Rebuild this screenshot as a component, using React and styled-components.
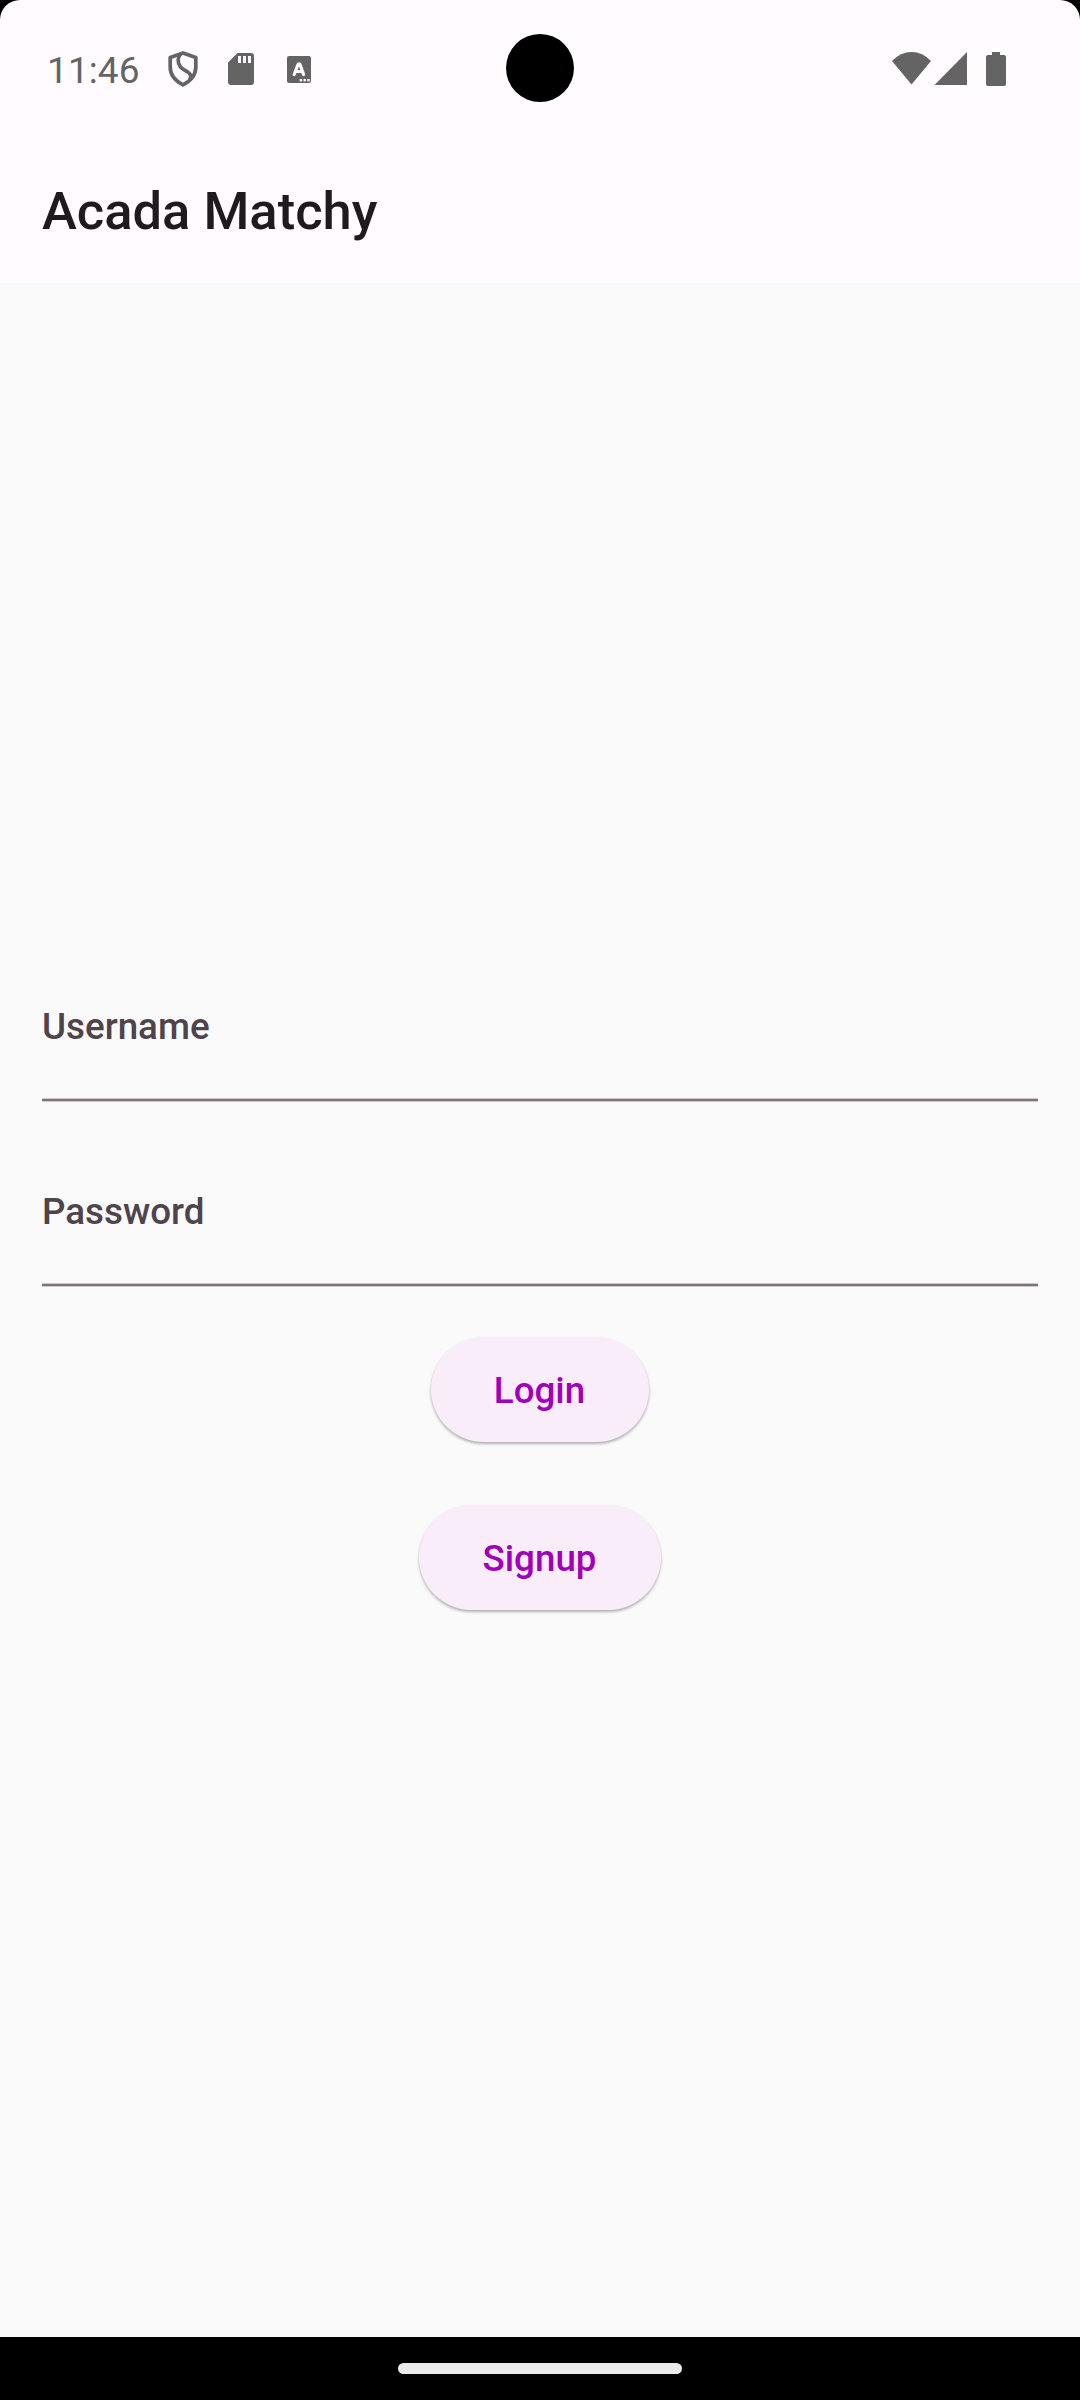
import React from "react";
import styled, { createGlobalStyle } from "styled-components";

const GlobalStyle = createGlobalStyle`
  html, body { margin: 0; padding: 0; background: #000; }
  * { box-sizing: border-box; }
`;

const Screen = styled.div`
  position: relative;
  width: 1080px;
  height: 2400px;
  display: flex;
  flex-direction: column;
  background: #000;
  font-family: Roboto, "Liberation Sans", sans-serif;
`;

const Header = styled.header`
  height: 283px;
  flex: none;
  display: flex;
  flex-direction: column;
  background: #fffbff;
  border-radius: 20px 20px 0 0;
`;

const StatusBar = styled.div`
  height: 136px;
  display: flex;
  align-items: center;
  justify-content: space-between;
  padding: 2px 74px 0 47px;
`;

const StatusGroup = styled.div`
  display: flex;
  align-items: center;
`;

const Clock = styled.span`
  width: 121px;
  padding-top: 3px;
  font-size: 37px;
  line-height: 44px;
  letter-spacing: 0.1px;
  color: #646464;
`;

const StatusIcon = styled.svg`
  display: block;
  flex: none;
  margin-right: ${(p) => p.$after || 0}px;
  color: #646464;
`;

const Camera = styled.div`
  position: absolute;
  left: 506px;
  top: 34px;
  width: 68px;
  height: 68px;
  border-radius: 50%;
  background: #000;
`;

const AppBar = styled.div`
  height: 147px;
  display: flex;
  align-items: center;
  padding: 2px 42px 0;
`;

const Title = styled.h1`
  margin: 0;
  font-size: 52.5px;
  line-height: 66px;
  font-weight: 500;
  color: #1e1a1d;
`;

const Form = styled.form`
  flex: 1;
  display: flex;
  flex-direction: column;
  padding: 700px 42px 0;
  background: #fafafa;
`;

const Field = styled.div`
  height: 119px;
  display: flex;
  flex-direction: column;
  justify-content: space-between;
  margin-bottom: ${(p) => p.$after}px;
`;

const Label = styled.label`
  padding-top: 22px;
  font-size: 36.75px;
  line-height: 44px;
  font-weight: 500;
  color: #4e444b;
`;

const Underline = styled.div`
  height: 4px;
  background: linear-gradient(
    #cdc9cc 0 1px,
    #7f747c 1px 3px,
    #cdc9cc 3px 4px
  );
`;

const Button = styled.button`
  align-self: center;
  width: ${(p) => p.$width}px;
  height: 105px;
  margin: 0 0 63px;
  padding: 2px 1px 0 0;
  border: 0;
  border-radius: 53px;
  background: #f9edf9;
  box-shadow: 0 2px 3px rgba(0, 0, 0, 0.28), 0 1px 2px rgba(0, 0, 0, 0.04);
  font: 500 36.75px/44px Roboto, "Liberation Sans", sans-serif;
  color: #a100bb;
`;

const NavBar = styled.nav`
  height: 63px;
  flex: none;
  display: flex;
  align-items: center;
  justify-content: center;
  background: #000;
`;

const HomeHandle = styled.div`
  width: 284px;
  height: 11px;
  border-radius: 6px;
  background: #ebebeb;
`;

const ShieldIcon = () => (
  <StatusIcon width="30" height="36" viewBox="0 0 30 36" $after={30} fill="none" stroke="currentColor" strokeWidth="3.7" strokeLinejoin="round">
    <path d="M15 2L27.800 6.400V16C27.800 23.500 22.500 30 15 33.800C7.500 30 2.200 23.500 2.200 16V6.400Z" />
    <path d="M12.500 3C9.500 6.500 9.300 12 12.500 16C16 19.800 20.500 20.500 22.300 23.500C23.200 25.200 22.500 27.500 21.800 29" />
  </StatusIcon>
);

const SdCardIcon = () => (
  <StatusIcon width="26" height="32" viewBox="0 0 26 32" $after={33} fill="currentColor">
    <path fillRule="evenodd" d="M9.500 0H23Q26 0 26 3V29Q26 32 23 32H3Q0 32 0 29V9.500ZM10 3V10H13V3ZM15 3V10H18V3ZM20 3V10H23V3Z" />
  </StatusIcon>
);

const KeyboardIcon = () => (
  <StatusIcon width="24" height="27" viewBox="0 0 24 27">
    <rect width="24" height="27" rx="2" fill="currentColor" />
    <path d="M7.200 18.500L11.200 8H12.800L16.600 18.500M8.800 15.500H15.200" fill="none" stroke="#fffbff" strokeWidth="3.200" strokeLinecap="round" strokeLinejoin="round" />
    <g fill="#fffbff">
      <rect x="12.700" y="23" width="2.400" height="2.400" />
      <rect x="16.500" y="23" width="2.400" height="2.400" />
      <rect x="20.300" y="23" width="2.400" height="2.400" />
    </g>
  </StatusIcon>
);

const WifiIcon = () => (
  <StatusIcon width="40" height="34" viewBox="0 0 40 34" $after={2} fill="currentColor">
    <path d="M19.500 32.500L0 9Q8.500 0 19.500 0T39 9Z" />
  </StatusIcon>
);

const SignalIcon = () => (
  <StatusIcon width="33" height="34" viewBox="0 0 33 34" $after={19} fill="currentColor">
    <path d="M33 0V33H0.500Z" />
  </StatusIcon>
);

const BatteryIcon = () => (
  <StatusIcon width="20" height="34" viewBox="0 0 20 34" fill="currentColor">
    <path d="M6 0H14V3H18Q20 3 20 5V32Q20 34 18 34H2Q0 34 0 32V5Q0 3 2 3H6Z" />
  </StatusIcon>
);

export default function App() {
  return (
    <Screen>
      <GlobalStyle />
      <Header>
        <StatusBar>
          <StatusGroup>
            <Clock>11:46</Clock>
            <ShieldIcon />
            <SdCardIcon />
            <KeyboardIcon />
          </StatusGroup>
          <StatusGroup>
            <WifiIcon />
            <SignalIcon />
            <BatteryIcon />
          </StatusGroup>
        </StatusBar>
        <AppBar>
          <Title>Acada Matchy</Title>
        </AppBar>
      </Header>
      <Camera />
      <Form>
        <Field $after={66}>
          <Label>Username</Label>
          <Underline />
        </Field>
        <Field $after={50}>
          <Label>Password</Label>
          <Underline />
        </Field>
        <Button type="button" $width={218}>Login</Button>
        <Button type="button" $width={242}>Signup</Button>
      </Form>
      <NavBar>
        <HomeHandle />
      </NavBar>
    </Screen>
  );
}
